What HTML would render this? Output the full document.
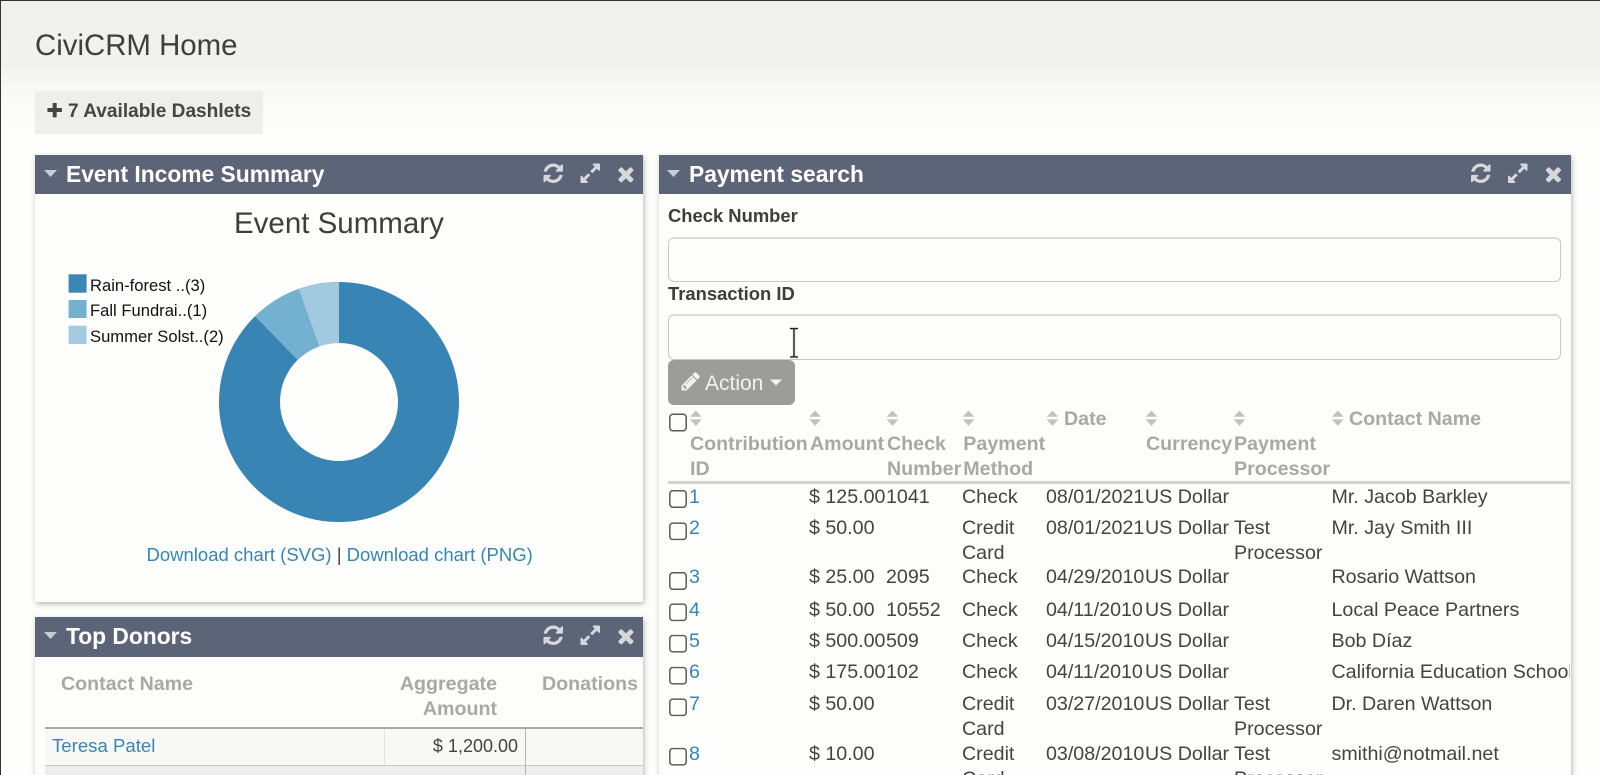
<!DOCTYPE html>
<html><head><meta charset="utf-8"><title>CiviCRM Home</title>
<style>
html,body{margin:0;padding:0;width:1600px;height:775px;overflow:hidden;background:#fdfefb}
body{position:relative;font-family:"Liberation Sans",sans-serif;color:#454340}
#bg{position:absolute;left:0;top:0;width:1600px;height:140px;background:linear-gradient(#f0f0ee 0,#f1f1ef 62px,#f8f9f6 90px,#fdfefb 135px)}
#bl{position:absolute;left:0;top:0;width:1px;height:775px;background:#333}
#bt{position:absolute;left:0;top:0;width:1600px;height:1px;background:#333}
.box{position:absolute}
.panel{position:absolute;background:#fdfefb;box-shadow:1px 2px 5px rgba(0,0,0,.28)}
.head{position:absolute;background:#5c6478;height:39px}
span.t{position:absolute;white-space:nowrap;line-height:24px;font-size:19.65px}
.h{font-weight:bold;color:#a9a8a3}
.ph{font-weight:bold;color:#fff;font-size:22.8px!important;line-height:39px!important}
.lb{font-weight:bold;font-size:18.4px!important;color:#3f3d39}
a{color:#3586b6;text-decoration:none}
.in{position:absolute;left:668px;width:891px;background:#fdfefb;border:1px solid #c9c9c6;border-top:2px solid #dcdcda;border-radius:6px;box-sizing:content-box}
svg{position:absolute;left:0;top:0}
.w{overflow:hidden}
</style></head><body>
<div id="bg"></div>

<span class="t" style="left:35px;top:27px;font-size:29.4px;line-height:38px;color:#3f3e3b">CiviCRM Home</span>

<div class="box" style="left:35px;top:91px;width:228px;height:43px;background:#eeeeec"></div>
<span class="t" style="left:68px;top:100px;font-size:19.1px;font-weight:bold;color:#464541">7 Available Dashlets</span>

<div class="panel" style="left:35px;top:155px;width:608px;height:447px"></div>
<div class="panel" style="left:35px;top:617px;width:608px;height:170px"></div>
<div class="panel" style="left:659px;top:155px;width:912px;height:640px"></div>
<div class="head" style="left:35px;top:155px;width:608px"></div>
<div class="head" style="left:35px;top:617px;width:608px;height:40px"></div>
<div class="head" style="left:659px;top:155px;width:912px"></div>

<span class="t ph" style="left:66px;top:155px">Event Income Summary</span>
<span class="t ph" style="left:66px;top:617px">Top Donors</span>
<span class="t ph" style="left:689px;top:155px">Payment search</span>

<span class="t" style="left:234px;top:204px;font-size:29.5px;line-height:40px;color:#3f3e3b">Event Summary</span>
<span class="t" style="left:90px;top:274px;font-size:16.6px;color:#111">Rain-forest ..(3)</span>
<span class="t" style="left:90px;top:299px;font-size:16.6px;color:#111">Fall Fundrai..(1)</span>
<span class="t" style="left:90px;top:325px;font-size:16.6px;color:#111">Summer Solst..(2)</span>
<span class="t" style="left:146.5px;top:543px;font-size:18.5px"><a href="#">Download chart (SVG)</a> | <a href="#">Download chart (PNG)</a></span>

<!-- top donors table -->
<div class="box" style="left:45px;top:729px;width:598px;height:36px;background:#f8f9f6"></div>
<div class="box" style="left:45px;top:766px;width:598px;height:9px;background:#eeeeec"></div>
<div class="box" style="left:45px;top:727px;width:598px;height:2px;background:#a9a9a6"></div>
<div class="box" style="left:45px;top:765px;width:598px;height:1px;background:#c9c9c4"></div>
<div class="box" style="left:384px;top:729px;width:1px;height:36px;background:#e4e4e1"></div>
<div class="box" style="left:525px;top:729px;width:1px;height:46px;background:#b5b5b0"></div>
<span class="t h" style="left:61px;top:672px">Contact Name</span>
<span class="t h" style="right:1103px;top:672px">Aggregate</span>
<span class="t h" style="right:1103px;top:697px">Amount</span>
<span class="t h" style="left:542px;top:672px">Donations</span>
<span class="t" style="left:52px;top:734px;font-size:18.6px"><a href="#">Teresa Patel</a></span>
<span class="t" style="right:1082px;top:734px;font-size:18px">$ 1,200.00</span>

<!-- payment search form -->
<span class="t lb" style="left:668px;top:204px">Check Number</span>
<span class="t lb" style="left:668px;top:282px">Transaction ID</span>
<div class="in" style="top:237px;height:42px"></div>
<div class="in" style="top:314px;height:43px"></div>
<div class="box" style="left:668px;top:360px;width:127px;height:45px;background:#9c9d98;border-radius:6px"></div>
<span class="t" style="left:705px;top:372px;font-size:21px;color:#f1f2ef">Action</span>

<!-- table header -->
<div class="box" style="left:668px;top:481px;width:902px;height:3px;background:#d3d3cd"></div>
<span class="t h" style="left:690px;top:432px">Contribution</span>
<span class="t h" style="left:690px;top:457px">ID</span>
<span class="t h" style="left:810px;top:432px">Amount</span>
<span class="t h" style="left:887px;top:432px">Check</span>
<span class="t h" style="left:887px;top:457px">Number</span>
<span class="t h" style="left:963.3px;top:432px">Payment</span>
<span class="t h" style="left:963.3px;top:457px">Method</span>
<span class="t h" style="left:1064px;top:407px">Date</span>
<span class="t h" style="left:1146px;top:432px">Currency</span>
<span class="t h" style="left:1234px;top:432px">Payment</span>
<span class="t h" style="left:1234px;top:457px">Processor</span>
<span class="t h" style="left:1349px;top:407px">Contact Name</span>

<!-- row 1 -->
<span class="t" style="left:689px;top:485px"><a href="#">1</a></span>
<span class="t" style="left:809px;top:485px">$ 125.00</span>
<span class="t" style="left:886px;top:485px">1041</span>
<span class="t" style="left:962px;top:485px">Check</span>
<span class="t" style="left:1046px;top:485px">08/01/2021</span>
<span class="t" style="left:1145px;top:485px">US Dollar</span>
<span class="t" style="left:1331.5px;top:485px">Mr. Jacob Barkley</span>
<!-- row 2 -->
<span class="t" style="left:689px;top:516px"><a href="#">2</a></span>
<span class="t" style="left:809px;top:516px">$ 50.00</span>
<span class="t" style="left:962px;top:516px">Credit</span>
<span class="t" style="left:962px;top:541px">Card</span>
<span class="t" style="left:1046px;top:516px">08/01/2021</span>
<span class="t" style="left:1145px;top:516px">US Dollar</span>
<span class="t" style="left:1234px;top:516px">Test</span>
<span class="t" style="left:1234px;top:541px">Processor</span>
<span class="t" style="left:1331.5px;top:516px">Mr. Jay Smith III</span>
<!-- row 3 -->
<span class="t" style="left:689px;top:565px"><a href="#">3</a></span>
<span class="t" style="left:809px;top:565px">$ 25.00</span>
<span class="t" style="left:886px;top:565px">2095</span>
<span class="t" style="left:962px;top:565px">Check</span>
<span class="t" style="left:1046px;top:565px">04/29/2010</span>
<span class="t" style="left:1145px;top:565px">US Dollar</span>
<span class="t" style="left:1331.5px;top:565px">Rosario Wattson</span>
<!-- row 4 -->
<span class="t" style="left:689px;top:598px"><a href="#">4</a></span>
<span class="t" style="left:809px;top:598px">$ 50.00</span>
<span class="t" style="left:886px;top:598px">10552</span>
<span class="t" style="left:962px;top:598px">Check</span>
<span class="t" style="left:1046px;top:598px">04/11/2010</span>
<span class="t" style="left:1145px;top:598px">US Dollar</span>
<span class="t" style="left:1331.5px;top:598px">Local Peace Partners</span>
<!-- row 5 -->
<span class="t" style="left:689px;top:629px"><a href="#">5</a></span>
<span class="t" style="left:809px;top:629px">$ 500.00</span>
<span class="t" style="left:886px;top:629px">509</span>
<span class="t" style="left:962px;top:629px">Check</span>
<span class="t" style="left:1046px;top:629px">04/15/2010</span>
<span class="t" style="left:1145px;top:629px">US Dollar</span>
<span class="t" style="left:1331.5px;top:629px">Bob Díaz</span>
<!-- row 6 -->
<span class="t" style="left:689px;top:660px"><a href="#">6</a></span>
<span class="t" style="left:809px;top:660px">$ 175.00</span>
<span class="t" style="left:886px;top:660px">102</span>
<span class="t" style="left:962px;top:660px">Check</span>
<span class="t" style="left:1046px;top:660px">04/11/2010</span>
<span class="t" style="left:1145px;top:660px">US Dollar</span>
<span class="t w" style="left:1331.5px;top:660px;width:238px">California Education School</span>
<!-- row 7 -->
<span class="t" style="left:689px;top:692px"><a href="#">7</a></span>
<span class="t" style="left:809px;top:692px">$ 50.00</span>
<span class="t" style="left:962px;top:692px">Credit</span>
<span class="t" style="left:962px;top:717px">Card</span>
<span class="t" style="left:1046px;top:692px">03/27/2010</span>
<span class="t" style="left:1145px;top:692px">US Dollar</span>
<span class="t" style="left:1234px;top:692px">Test</span>
<span class="t" style="left:1234px;top:717px">Processor</span>
<span class="t" style="left:1331.5px;top:692px">Dr. Daren Wattson</span>
<!-- row 8 -->
<span class="t" style="left:689px;top:742px"><a href="#">8</a></span>
<span class="t" style="left:809px;top:742px">$ 10.00</span>
<span class="t" style="left:962px;top:742px">Credit</span>
<span class="t" style="left:962px;top:767px">Card</span>
<span class="t" style="left:1046px;top:742px">03/08/2010</span>
<span class="t" style="left:1145px;top:742px">US Dollar</span>
<span class="t" style="left:1234px;top:742px">Test</span>
<span class="t" style="left:1234px;top:767px">Processor</span>
<span class="t" style="left:1331.5px;top:742px">smithi@notmail.net</span>

<svg width="1600" height="775" viewBox="0 0 1600 775">
<defs>
<symbol id="ref" viewBox="128 128 1536 1536"><path d="M1639 1056q0 5-1 7-64 268-268 434.5t-478 166.5q-146 0-282.5-55t-243.5-157l-129 129q-19 19-45 19t-45-19-19-45v-448q0-26 19-45t45-19h448q26 0 45 19t19 45-19 45l-137 137q71 66 161 102t187 36q134 0 250-65t186-179q11-17 53-117 8-23 30-23h192q13 0 22.5 9.5t9.5 22.5zm25-800v448q0 26-19 45t-45 19h-448q-26 0-45-19t-19-45 19-45l138-138q-148-137-349-137-134 0-250 65t-186 179q-11 17-53 117-8 23-30 23h-199q-13 0-22.5-9.5t-9.5-22.5v-7q65-268 270-434.5t480-166.5q146 0 284 55.5t245 156.5l130-129q19-19 45-19t45 19 19 45z"/></symbol>
<symbol id="exp" viewBox="128 128 1536 1536"><path d="M883 1056q0 13-10 23l-332 332 144 144q19 19 19 45t-19 45-45 19h-448q-26 0-45-19t-19-45v-448q0-26 19-45t45-19 45 19l144 144 332-332q10-10 23-10t23 10l114 114q10 10 10 23zm781-864v448q0 26-19 45t-45 19-45-19l-144-144-332 332q-10 10-23 10t-23-10l-114-114q-10-10-10-23t10-23l332-332-144-144q-19-19-19-45t19-45 45-19h448q26 0 45 19t19 45z"/></symbol>
<symbol id="cls" viewBox="238 238 1252 1316"><path d="M1490 1322q0 40-28 68l-136 136q-28 28-68 28t-68-28l-294-294-294 294q-28 28-68 28t-68-28l-136-136q-28-28-28-68t28-68l294-294-294-294q-28-28-28-68t28-68l136-136q28-28 68-28t68 28l294 294 294-294q28-28 68-28t68 28l136 136q28 28 28 68t-28 68l-294 294 294 294q28 28 28 68z"/></symbol>
<symbol id="sort" viewBox="0 0 12 16"><path d="M6 0L12 6.4H0zM0 9.2H12L6 16z"/></symbol>
<symbol id="plus" viewBox="160 160 1440 1440"><path d="M1600 736v192q0 40-28 68t-68 28h-416v416q0 40-28 68t-68 28h-192q-40 0-68-28t-28-68v-416h-416q-40 0-68-28t-28-68v-192q0-40 28-68t68-28h416v-416q0-40 28-68t68-28h192q40 0 68 28t28 68v416h416q40 0 68 28t28 68z"/></symbol>
<symbol id="pen" viewBox="0 128 1664 1664"><path d="M491 1536l91-91-235-235-91 91v107h128v128h107zm523-928q0-22-22-22-10 0-17 7l-542 542q-7 7-7 17 0 22 22 22 10 0 17-7l542-542q7-7 7-17zm-54-192l416 416-832 832h-416v-416zm683 96q0 53-37 90l-166 166-416-416 166-165q36-38 90-38 53 0 91 38l235 234q37 39 37 91z"/></symbol>
<symbol id="cb" viewBox="0 0 18 18"><rect x="0.8" y="0.8" width="16.4" height="16.4" rx="3" fill="#fdfefb" stroke="#5a5a58" stroke-width="1.5"/></symbol>
</defs>

<!-- plus -->
<use href="#plus" x="47" y="103" width="15" height="15" fill="#464541"/>

<!-- header controls -->
<g fill="#c9ccd1">
<path d="M44 170H57L50.5 177z"/>
<path d="M44 632H57L50.5 639z"/>
<path d="M667 170H680L673.5 177z"/>
</g>
<g fill="#d6d8dc">
<use href="#ref" x="543.5" y="163.5" width="19.5" height="19.5"/>
<use href="#exp" x="580.5" y="163.5" width="19.5" height="19.5"/>
<use href="#cls" x="617.5" y="165.5" width="16" height="17"/>
<use href="#ref" x="543.5" y="625.5" width="19.5" height="19.5"/>
<use href="#exp" x="580.5" y="625.5" width="19.5" height="19.5"/>
<use href="#cls" x="617.5" y="627.5" width="16" height="17"/>
<use href="#ref" x="1471" y="163.5" width="19.5" height="19.5"/>
<use href="#exp" x="1508" y="163.5" width="19.5" height="19.5"/>
<use href="#cls" x="1545" y="165.5" width="16" height="17"/>
</g>

<!-- legend -->
<rect x="68.6" y="274.3" width="18" height="18.4" fill="#3a87b7"/>
<rect x="68.6" y="300" width="18" height="18" fill="#74b0d0"/>
<rect x="68.6" y="325.7" width="18" height="18.3" fill="#a4cbdf"/>

<!-- donut -->
<circle cx="339" cy="402" r="120" fill="#3784b5"/>
<path d="M339 282A120 120 0 0 0 298.6 289L319.1 346.5A59 59 0 0 1 339 343Z" fill="#a2cade"/>
<path d="M298.6 289A120 120 0 0 0 254.9 316.4L297.6 359.9A59 59 0 0 1 319.1 346.5Z" fill="#74b0d0"/>
<circle cx="339" cy="402" r="59" fill="#fefefc"/>

<!-- pencil + caret -->
<use href="#pen" x="680" y="372" width="20" height="20" fill="#f1f2ef"/>
<path d="M770 379.5H782L776 385.5z" fill="#f1f2ef"/>

<!-- sort arrows -->
<g fill="#c2c2bd">
<use href="#sort" x="690" y="410.5" width="11.6" height="15.5"/>
<use href="#sort" x="809.3" y="410.5" width="11.6" height="15.5"/>
<use href="#sort" x="886.7" y="410.5" width="11.6" height="15.5"/>
<use href="#sort" x="962.7" y="410.5" width="11.6" height="15.5"/>
<use href="#sort" x="1046.7" y="410.5" width="11.6" height="15.5"/>
<use href="#sort" x="1145.7" y="410.5" width="11.6" height="15.5"/>
<use href="#sort" x="1233.7" y="410.5" width="11.6" height="15.5"/>
<use href="#sort" x="1332" y="410.5" width="11.6" height="15.5"/>
</g>

<!-- checkboxes -->
<use href="#cb" x="669" y="413.5" width="18" height="18"/>
<use href="#cb" x="669" y="490" width="18" height="18"/>
<use href="#cb" x="669" y="522.3" width="18" height="18"/>
<use href="#cb" x="669" y="572" width="18" height="18"/>
<use href="#cb" x="669" y="603.3" width="18" height="18"/>
<use href="#cb" x="669" y="634.7" width="18" height="18"/>
<use href="#cb" x="669" y="666.7" width="18" height="18"/>
<use href="#cb" x="669" y="698.3" width="18" height="18"/>
<use href="#cb" x="669" y="747.7" width="18" height="18"/>

<!-- I-beam cursor -->
<path d="M790 328.5h3l1 1 1-1h3M794 330V356M790 357h3l1-1 1 1h3" fill="none" stroke="#e8e8e6" stroke-width="3.5"/>
<path d="M790 328.5h3l1 1 1-1h3M794 330V356M790 357h3l1-1 1 1h3" fill="none" stroke="#111" stroke-width="1.3"/>
</svg>
<div id="bl"></div><div id="bt"></div>
</body></html>
